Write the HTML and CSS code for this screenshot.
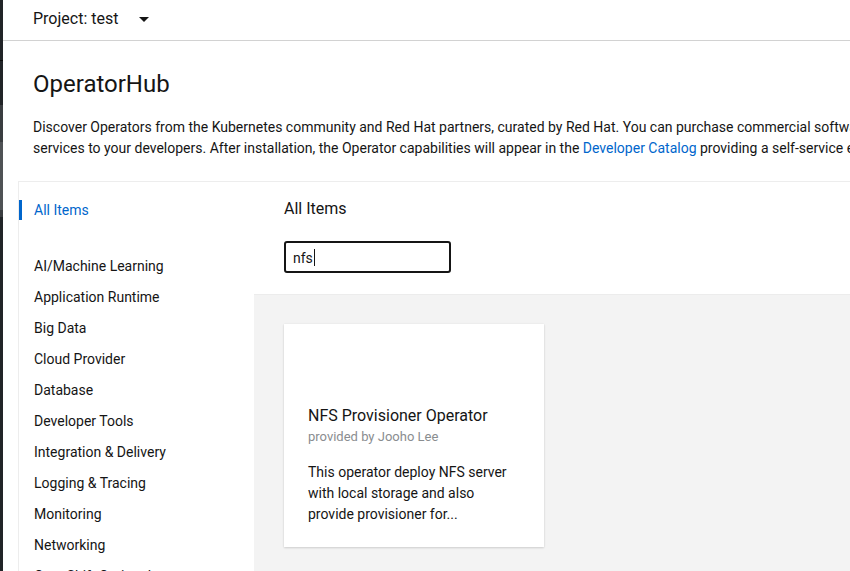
FILE: index.html
```html
<!DOCTYPE html>
<html lang="en">
<head>
<meta charset="utf-8">
<title>OperatorHub</title>
<link rel="stylesheet" href="styles.css">
</head>
<body>
<div class="app">
  <div class="rail"></div>
  <div class="main">
    <header class="masthead">
      <span class="project">Project: test</span>
      <span class="caret"></span>
    </header>
    <section class="page-head">
      <h1 class="title">OperatorHub</h1>
      <p class="intro">
        <span class="line">Discover Operators from the Kubernetes community and Red Hat partners, curated by Red Hat. You can purchase commercial software through Red Hat Marketplace. You can install Operators on your clusters to provide optional add-ons and shared</span>
        <span class="line">services to your developers. After installation, the Operator capabilities will appear in the <a href="#" class="link">Developer Catalog</a> providing a self-service experience.</span>
      </p>
    </section>
    <div class="catalog">
      <nav class="filters">
        <div class="filter active">All Items</div>
        <ul class="categories">
          <li>AI/Machine Learning</li>
          <li>Application Runtime</li>
          <li>Big Data</li>
          <li>Cloud Provider</li>
          <li>Database</li>
          <li>Developer Tools</li>
          <li>Integration &amp; Delivery</li>
          <li>Logging &amp; Tracing</li>
          <li>Monitoring</li>
          <li>Networking</li>
          <li>OpenShift Optional</li>
          <li>Security</li>
          <li>Storage</li>
        </ul>
      </nav>
      <div class="content">
        <div class="toolbar">
          <h2 class="section-title">All Items</h2>
          <div class="search"><span class="search-value">nfs</span><span class="cursor"></span></div>
        </div>
        <div class="tiles">
          <article class="tile">
            <div class="tile-logo"></div>
            <div class="tile-name">NFS Provisioner Operator</div>
            <div class="tile-vendor">provided by Jooho Lee</div>
            <p class="tile-desc">This operator deploy NFS server with local storage and also provide provisioner for...</p>
          </article>
        </div>
      </div>
    </div>
  </div>
</div>
</body>
</html>
```

FILE: styles.css
```css
* { box-sizing: border-box; }
html, body {
  margin: 0;
  padding: 0;
  height: 100%;
  overflow: hidden;
  background: #ffffff;
}
body {
  font-family: Roboto, "Liberation Sans", sans-serif;
  color: #151515;
  font-size: 14px;
}
.app {
  display: flex;
  height: 100%;
}
.rail {
  flex: 0 0 3px;
  background: linear-gradient(to bottom,
    #212427 0, #212427 60px, #0a0a0a 60px, #0a0a0a 61px,
    #212427 61px, #212427 105px, #3a3d40 105px, #3a3d40 142px,
    #4f5255 142px, #4f5255 210px, #3a3d40 210px, #3a3d40 217px,
    #212427 217px, #212427 100%);
}
.main {
  flex: 1 1 auto;
  display: flex;
  flex-direction: column;
  min-width: 0;
}
.masthead {
  height: 41px;
  flex: 0 0 41px;
  border-bottom: 1px solid #d2d2d2;
  display: flex;
  align-items: center;
  padding: 0 0 3px 30px;
  gap: 21px;
}
.project {
  font-size: 16px;
  line-height: 24px;
}
.caret {
  width: 0;
  height: 0;
  border-left: 5px solid transparent;
  border-right: 5px solid transparent;
  border-top: 5px solid #151515;
  margin-top: 1px;
}
.page-head {
  padding: 29px 0 0 30px;
}
.title {
  margin: 0;
  font-size: 24px;
  font-weight: 400;
  line-height: 29px;
}
.intro {
  margin: 18px 0 0;
  line-height: 21px;
  font-size: 14px;
}
.line {
  display: block;
  white-space: nowrap;
}
.link {
  color: #0066cc;
  text-decoration: none;
}
.catalog {
  flex: 1 1 auto;
  display: flex;
  margin: 22px 0 0 15px;
  border-top: 1px solid #ededed;
  border-left: 1px solid #ededed;
  min-height: 0;
}
.filters {
  flex: 0 0 235px;
  padding-top: 18px;
}
.filter {
  line-height: 20px;
  padding-left: 12px;
  border-left: 3px solid transparent;
}
.filter.active {
  color: #0066cc;
  border-left-color: #0066cc;
}
.categories {
  list-style: none;
  margin: 31px 0 0;
  padding: 0 0 0 15px;
}
.categories li {
  line-height: 21px;
  padding: 5px 0;
}
.content {
  flex: 1 1 auto;
  display: flex;
  flex-direction: column;
}
.toolbar {
  padding: 15px 30px 21px;
}
.section-title {
  margin: 0;
  font-size: 16px;
  font-weight: 400;
  line-height: 24px;
}
.search {
  margin-top: 20px;
  width: 167px;
  height: 32px;
  border: 2px solid #151515;
  border-radius: 3px;
  display: flex;
  align-items: center;
  padding: 1px 0 0 7px;
  font-size: 14px;
}
.cursor {
  width: 1px;
  height: 17px;
  background: #151515;
  margin-left: 1px;
}
.tiles {
  flex: 1 1 auto;
  background: #f3f3f3;
  border-top: 1px solid #ececec;
  padding: 29px 30px;
  display: flex;
  align-items: flex-start;
}
.tile {
  width: 260px;
  background: #ffffff;
  box-shadow: 0 1px 2px rgba(3, 3, 3, 0.14), 0 0 2px rgba(3, 3, 3, 0.06);
  padding: 24px 24px 22px;
}
.tile-logo {
  height: 40px;
  margin-bottom: 16px;
}
.tile-name {
  font-size: 16px;
  line-height: 24px;
}
.tile-vendor {
  font-size: 13px;
  line-height: 18px;
  color: #8a8d90;
}
.tile-desc {
  margin: 16px 0 0;
  font-size: 14px;
  line-height: 21px;
}
```
